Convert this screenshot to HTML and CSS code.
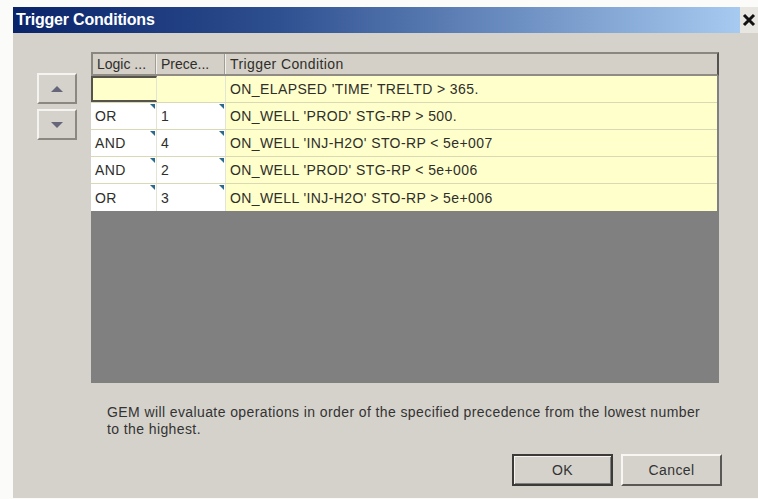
FILE: index.html
```html
<!DOCTYPE html>
<html>
<head>
<meta charset="utf-8">
<title>Trigger Conditions</title>
<link rel="stylesheet" href="styles.css">
</head>
<body>
<div class="dialog">
  <div class="titlebar">
    <div class="caption">Trigger Conditions</div>
    <div class="close">
      <svg width="14" height="14" viewBox="0 0 14 14"><path d="M2 2 L12 12 M12 2 L2 12" stroke="#111" stroke-width="3"/></svg>
    </div>
  </div>
  <div class="content">
    <div class="main">
      <div class="movers">
        <button class="mover"><span class="tri up"></span></button>
        <button class="mover"><span class="tri down"></span></button>
      </div>
      <div class="grid">
        <div class="row head">
          <div class="cell c1">Logic ...</div>
          <div class="cell c2">Prece...</div>
          <div class="cell c3">Trigger Condition</div>
        </div>
        <div class="row">
          <div class="cell c1 yellow focus"></div>
          <div class="cell c2 yellow"></div>
          <div class="cell c3">ON_ELAPSED 'TIME' TRELTD &gt; 365.</div>
        </div>
        <div class="row">
          <div class="cell c1 drop">OR</div>
          <div class="cell c2 drop">1</div>
          <div class="cell c3">ON_WELL 'PROD' STG-RP &gt; 500.</div>
        </div>
        <div class="row">
          <div class="cell c1 drop">AND</div>
          <div class="cell c2 drop">4</div>
          <div class="cell c3">ON_WELL 'INJ-H2O' STO-RP &lt; 5e+007</div>
        </div>
        <div class="row">
          <div class="cell c1 drop">AND</div>
          <div class="cell c2 drop">2</div>
          <div class="cell c3">ON_WELL 'PROD' STG-RP &lt; 5e+006</div>
        </div>
        <div class="row last">
          <div class="cell c1 drop">OR</div>
          <div class="cell c2 drop">3</div>
          <div class="cell c3">ON_WELL 'INJ-H2O' STO-RP &gt; 5e+006</div>
        </div>
        <div class="empty"></div>
      </div>
    </div>
    <p class="note">GEM will evaluate operations in order of the specified precedence from the lowest number to the highest.</p>
    <div class="actions">
      <button class="btn default">OK</button>
      <button class="btn">Cancel</button>
    </div>
  </div>
</div>
</body>
</html>
```
FILE: styles.css
```css
html, body {
  margin: 0;
  padding: 0;
  background: #fbfbfa;
}

body {
  font-family: "Liberation Sans", Arial, sans-serif;
  font-size: 14px;
  letter-spacing: 0.4px;
  color: #2e2e2a;
}

.dialog {
  margin: 7px 0 0 13px;
  width: 745px;
  height: 491px;
  background: #d5d2cc;
  display: flex;
  flex-direction: column;
}

.titlebar {
  height: 26px;
  display: flex;
  background: #fbfbfa;
}

.caption {
  flex: 1;
  background: linear-gradient(to right, #0a246a 0%, #2c4d8e 35%, #a6caf0 100%);
  color: #fff;
  font-weight: bold;
  font-size: 16px;
  line-height: 26px;
  padding-left: 3px;
  letter-spacing: -0.2px;
}

.close {
  width: 18px;
  background: #e8e6e1;
  display: flex;
  align-items: center;
  justify-content: center;
}

.content {
  flex: 1;
  padding: 19px 0 0 24px;
  display: flex;
  flex-direction: column;
}

.main {
  display: flex;
  gap: 14px;
}

.movers {
  display: flex;
  flex-direction: column;
  gap: 5px;
  padding-top: 21px;
}

.mover {
  width: 40px;
  height: 31px;
  padding: 0;
  background: #d5d2cc;
  border: 2px solid;
  border-color: #f4f3f0 #8a8880 #8a8880 #f4f3f0;
  display: flex;
  align-items: center;
  justify-content: center;
}

.tri {
  width: 0;
  height: 0;
  border-left: 6px solid transparent;
  border-right: 6px solid transparent;
}

.tri.up {
  border-bottom: 6px solid #66667a;
}

.tri.down {
  border-top: 6px solid #66667a;
}

.grid {
  width: 628px;
  height: 331px;
  background: #808080;
  display: flex;
  flex-direction: column;
}

.row {
  display: flex;
  height: 27px;
  background: #ffffcc;
  border-bottom: 1px solid #d9d9b4;
  box-sizing: border-box;
  width: 626px;
}

.row.last {
  border-bottom: none;
}

.row.head {
  height: 24px;
  width: 628px;
  background: #d4d0c8;
  border-top: 2px solid #8a8780;
  border-bottom: 2px solid #8f8c85;
  border-right: 2px solid #55524d;
}

.cell {
  position: relative;
  display: flex;
  align-items: center;
  padding-left: 4px;
  box-sizing: border-box;
  white-space: nowrap;
  overflow: hidden;
}

.c1 { width: 66px; }
.c2 { width: 69px; }
.c3 { flex: 1; }

.head .cell {
  border-right: 1px solid #f2f0ea;
  box-shadow: inset -1px 0 0 #a09d96;
  letter-spacing: 0;
}

.head .c1 {
  border-left: 2px solid #8a8780;
}

.head .c3 {
  border-right: none;
  box-shadow: none;
  letter-spacing: 0.4px;
}

.row:not(.head) .c1,
.row:not(.head) .c2 {
  border-right: 1px solid #e4e4d4;
}

.drop {
  background: #ffffff;
}

.drop::after {
  content: "";
  position: absolute;
  top: 1px;
  right: 1px;
  width: 0;
  height: 0;
  border-top: 5px solid #2b6a8c;
  border-left: 5px solid transparent;
}

.yellow {
  background: #ffffcc;
}

.focus {
  border: 2px solid #56534a;
}

.empty {
  flex: 1;
}

.note {
  margin: 21px 0 0 70px;
  width: 600px;
  font-size: 14px;
  line-height: 17px;
  letter-spacing: 0.4px;
  color: #333;
}

.actions {
  display: flex;
  gap: 8px;
  margin: 16px 0 0 475px;
}

.btn {
  width: 101px;
  height: 32px;
  background: #d5d2cc;
  border: 2px solid;
  border-color: #f7f6f3 #5a5854 #5a5854 #f7f6f3;
  font-family: "Liberation Sans", Arial, sans-serif;
  font-size: 14px;
  letter-spacing: 0.4px;
  color: #333;
  padding: 0;
}

.btn.default {
  border: 2px solid #3c3b38;
  box-shadow: inset 1px 1px 0 #f5f4f1, inset -1px -1px 0 #808080;
}
```
